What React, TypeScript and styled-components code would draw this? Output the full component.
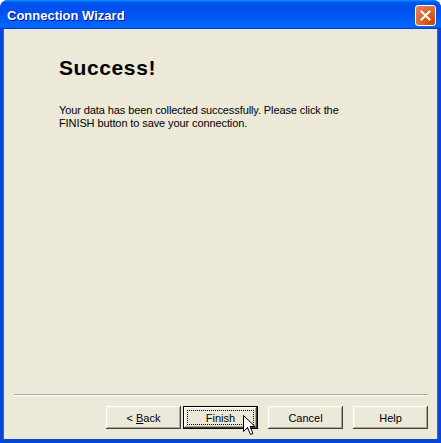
import React from 'react';
import styled, { createGlobalStyle } from 'styled-components';

const GlobalStyle = createGlobalStyle`
  html, body {
    margin: 0;
    padding: 0;
    background: #ffffff;
  }
  body {
    font-family: 'Liberation Sans', Arial, sans-serif;
  }
`;

const Window = styled.div`
  width: 441px;
  height: 443px;
  display: flex;
  flex-direction: column;
  background: #0846d8;
  border-radius: 8px 8px 0 0;
  overflow: hidden;
  box-sizing: border-box;
  position: relative;
`;

const TitleBar = styled.div`
  height: 29px;
  flex: none;
  display: flex;
  align-items: center;
  justify-content: space-between;
  padding: 0 5px 0 7px;
  background: linear-gradient(
    to bottom,
    #0997ff 0%,
    #0053ee 8%,
    #0050ee 40%,
    #0066ff 88%,
    #0066ff 93%,
    #005bff 95%,
    #003dd7 96%,
    #003dd7 100%
  );
`;

const Title = styled.span`
  color: #ffffff;
  font-weight: bold;
  font-size: 13px;
  text-shadow: 1px 1px #0f1089;
  padding-top: 1px;
`;

const CloseButton = styled.div`
  width: 21px;
  height: 21px;
  box-sizing: border-box;
  border: 1px solid #ffffff;
  border-radius: 3px;
  background: radial-gradient(circle at 85% 85%, #cc4600 0%, #dc6527 45%, #e47a52 90%, #e8947a 100%);
  display: flex;
  align-items: center;
  justify-content: center;
  margin-top: 1px;
`;

const Body = styled.div`
  flex: 1;
  display: flex;
  flex-direction: column;
  margin: 0 4px 4px 4px;
  background: #ece9d8;
  box-shadow: -1px 0 #166aee, 1px 0 #166aee;
  position: relative;
`;

const Content = styled.div`
  flex: 1;
  padding: 26px 40px 0 55px;
`;

const Heading = styled.h1`
  margin: 0;
  font-size: 21px;
  font-weight: bold;
  letter-spacing: 0.6px;
  color: #000000;
  line-height: 26px;
`;

const Text = styled.p`
  margin: 23px 0 0 0;
  font-size: 11px;
  letter-spacing: -0.1px;
  line-height: 13px;
  color: #000000;
`;

const Footer = styled.div`
  flex: none;
  padding: 0 9px 10px 10px;
`;

const Separator = styled.div`
  height: 1px;
  background: #aca899;
  border-bottom: 1px solid #ffffff;
`;

const ButtonRow = styled.div`
  display: flex;
  justify-content: flex-end;
  align-items: center;
  margin-top: 10px;
  gap: 10px;
`;

const Pair = styled.div`
  display: flex;
  gap: 2px;
`;

const Button = styled.div<{ $default?: boolean }>`
  width: 75px;
  height: 23px;
  box-sizing: border-box;
  display: flex;
  align-items: center;
  justify-content: center;
  font-size: 11px;
  color: #000000;
  background: #ece9d8;
  position: relative;
  border: ${p => (p.$default ? '1px solid #000000' : 'none')};
  box-shadow: inset -1px -1px #404040, inset 1px 1px #ffffff, inset -2px -2px #aca899, inset 2px 2px #f1efe2;
`;

const FocusRing = styled.span`
  position: absolute;
  inset: 3px;
  border: 1px dotted #000000;
`;

const Underlined = styled.span`
  text-decoration: underline;
`;

const Cursor = styled.svg`
  position: absolute;
  left: 243px;
  top: 415px;
`;

export default function App() {
  return (
    <>
      <GlobalStyle />
      <Window>
        <TitleBar>
          <Title>Connection Wizard</Title>
          <CloseButton>
            <svg width="11" height="11" viewBox="0 0 11 11">
              <path d="M1.5 1.5 L9.5 9.5 M9.5 1.5 L1.5 9.5" stroke="#ffffff" strokeWidth="2" strokeLinecap="square" />
            </svg>
          </CloseButton>
        </TitleBar>
        <Body>
          <Content>
            <Heading>Success!</Heading>
            <Text>
              Your data has been collected successfully. Please click the
              <br />
              FINISH button to save your connection.
            </Text>
          </Content>
          <Footer>
            <Separator />
            <ButtonRow>
              <Pair>
                <Button>
                  &lt;&nbsp;<Underlined>B</Underlined>ack
                </Button>
                <Button $default>
                  <FocusRing />
                  Finish
                </Button>
              </Pair>
              <Button>Cancel</Button>
              <Button>Help</Button>
            </ButtonRow>
          </Footer>
        </Body>
        <Cursor width="13" height="21" viewBox="0 0 13 21">
          <path
            d="M0.5 0.5 L0.5 16.5 L4.5 12.5 L7.5 19.5 L10 18.5 L7 11.5 L12 11.5 Z"
            fill="#ffffff"
            stroke="#000000"
            strokeWidth="1"
          />
        </Cursor>
      </Window>
    </>
  );
}
